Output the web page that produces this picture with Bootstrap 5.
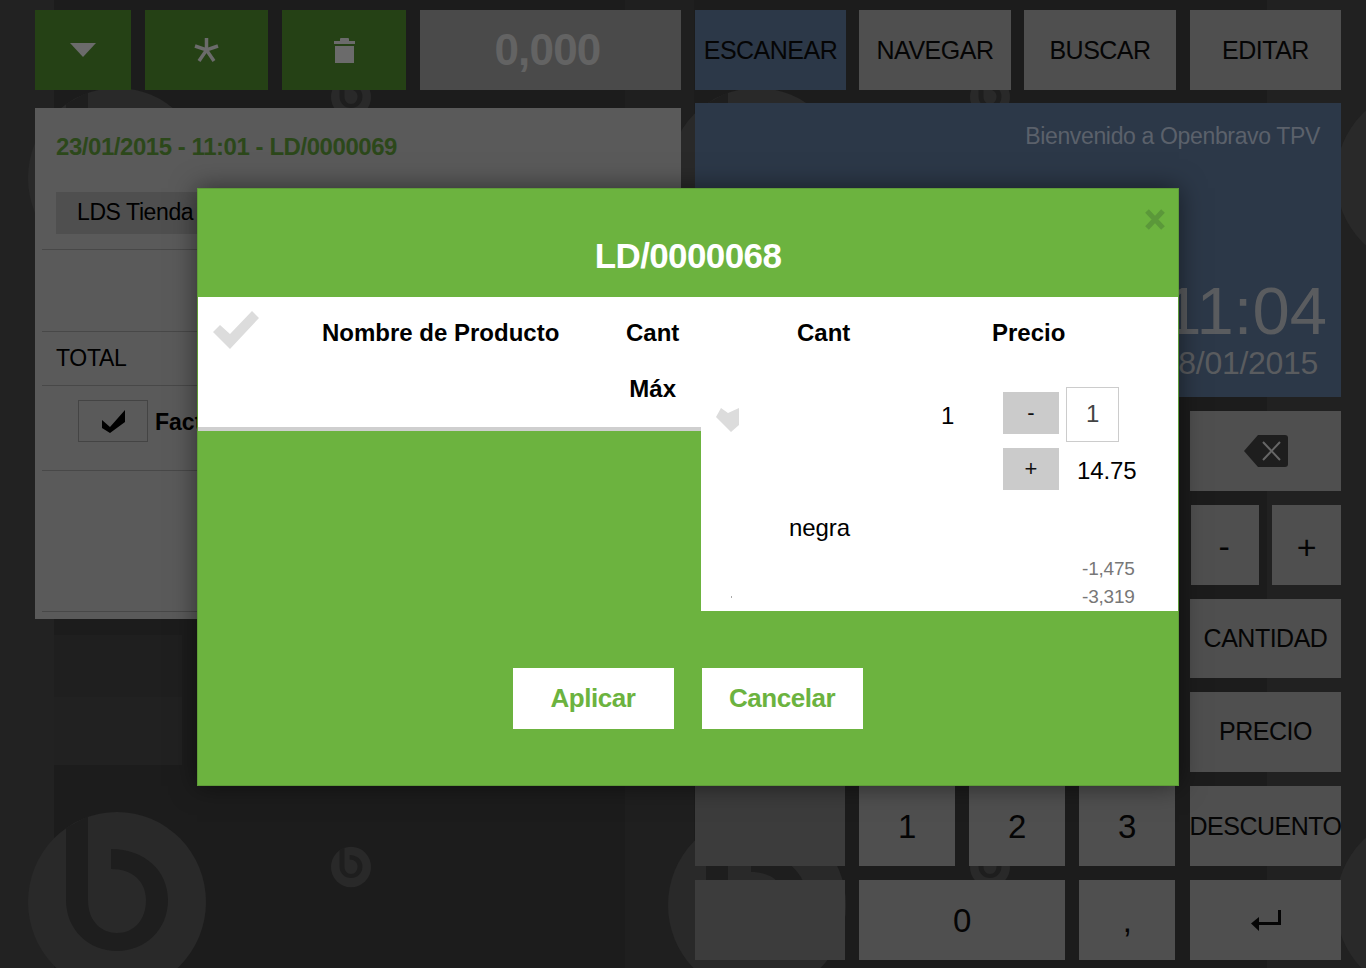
<!DOCTYPE html>
<html lang="es">
<head>
    <meta charset="UTF-8">
    <meta name="viewport" content="width=device-width, initial-scale=1.0">
    <title>Openbravo TPV</title>
    <link rel="stylesheet" href="https://cdn.jsdelivr.net/npm/bootstrap@5.3.0/dist/css/bootstrap.min.css">
    <style>
        body { background: #1c1c1c; font-family: "Liberation Sans", Arial, sans-serif; height: 968px; overflow: hidden; color: #000; }
        .pos-wrap { position: relative; width: 1366px; height: 968px; overflow: hidden; }
        .bg-logos { position: absolute; inset: 0; }
        .pos-main { position: relative; display: grid; grid-template-columns: 646px 646px; column-gap: 14px; padding: 10px 0 0 35px; }
        .pos-btn { background: #4f4f4f; display: flex; align-items: center; justify-content: center; font-size: 25px; letter-spacing: -.5px; height: 80px; color: #050505; white-space: nowrap; }
        .btn-dark-green { background: #254115; }
        .btn-dark-blue { background: #2c3848; }
        .btn-blank { background: #3c3c3c; }
        .top-left { display: grid; grid-template-columns: 96px 123px 124px 261px; column-gap: 14px; }
        .top-right { display: grid; grid-template-columns: 151px 152px 152px 152px; column-gap: 13px; }
        .top-right .pos-btn { padding-top: 2px; }
        .top-right .pos-btn:last-child { margin-left: 1px; width: 151px; }
        .qty-box { font-size: 44px; font-weight: 700; color: #636363; background: #4a4a4a; padding-right: 6px; letter-spacing: -.8px; }
        .ticket-panel { background: #5a5a5a; height: 511px; margin-top: 18px; padding: 0 7px; }
        .ticket-title { color: #2c481a; font-weight: 700; font-size: 24px; letter-spacing: -.45px; padding: 21px 14px 0; height: 84px; }
        .ticket-row { border-bottom: 1px solid #484848; }
        .bp-name { display: block; background: #4f4f4f; font-size: 23px; letter-spacing: -.4px; margin-left: 14px; padding: 3px 21px; height: 42px; width: 300px; }
        .invoice-box { width: 70px; height: 42px; border: 1px solid #444; display: flex; align-items: center; justify-content: center; }
        .info-panel { background: #2c3848; height: 294px; margin-top: 13px; padding: 16px 21px; position: relative; text-align: right; color: #5b616b; }
        .info-welcome { font-size: 23px; letter-spacing: -.35px; }
        .info-clock { position: absolute; right: 14px; top: 170px; font-size: 67px; line-height: 76px; color: #5a5c5f; }
        .info-date { position: absolute; right: 23px; top: 242px; font-size: 32px; line-height: 37px; letter-spacing: -.3px; color: #5a5c5f; }
        .keypad { display: grid; grid-template-columns: 150px 96px 96px 96px 152px; grid-template-rows: 80px 80px 79px 80px 80px 80px; gap: 14px; margin-top: 14px; }
        .keypad .pos-btn { height: auto; }
        .keypad-side { margin-left: 1px; }
        .small-keys { display: grid; grid-template-columns: 68px 69px; column-gap: 13px; padding-left: 1px; }
        .minus-key { font-size: 34px; padding: 2px 2px 0 0; }
        .plus-key { font-size: 34px; padding: 4px 0 0 0; }
        .digit-key { font-size: 33px; padding-top: 1px; }
        .popup { position: absolute; left: 197px; top: 188px; width: 982px; height: 598px; background: #6cb33f; border: 1px solid #5f9c38; box-shadow: 0 0 24px rgba(0,0,0,.5); }
        .popup-close { position: absolute; right: 13px; top: 20px; line-height: 0; }
        .popup-title { color: #fff; font-weight: 700; font-size: 35px; letter-spacing: -.6px; text-align: center; height: 108px; padding-top: 45px; line-height: 44px; }
        .popup-body { display: flex; height: 314px; }
        .popup-head { position: relative; width: 503px; height: 134px; background: #fff; border-bottom: 4px solid #cfcfcf; font-weight: 700; font-size: 24px; line-height: 56px; }
        .head-check { position: absolute; left: 15px; top: 14px; }
        .head-name { position: absolute; left: 124px; top: 8px; }
        .head-max { position: absolute; left: 428px; top: 8px; text-align: center; }
        .popup-line { position: relative; width: 477px; background: #fff; font-size: 24px; letter-spacing: -.1px; }
        .popup-line > * { position: absolute; }
        .line-head { font-weight: 700; line-height: 56px; letter-spacing: 0; top: 8px; }
        .qty-step { width: 56px; height: 42px; background: #cbcbcb; border: 0; padding: 0; font-size: 22px; line-height: 36px; color: #111; border-radius: 0; }
        .qty-input { width: 53px; height: 55px; border: 1px solid #ccc; background: #fff; text-align: center; line-height: 52px; color: #444; }
        .tax-val { font-size: 19px; color: #777; letter-spacing: -.2px; }
        .tiny-dot { left: 30px; top: 299px; width: 1px; height: 2px; background: #aaa; }
        .popup-actions { display: flex; justify-content: center; gap: 28px; margin-top: 57px; margin-left: -1px; }
        .popup-btn { width: 161px; height: 61px; background: #fff; color: #6cb33f; border: 0; border-radius: 0; font-weight: 700; font-size: 26px; letter-spacing: -.45px; padding: 0; }
        .popup-btn:hover { background: #fff; color: #6cb33f; }
    </style>
</head>
<body>
    <div class="pos-wrap">
        <!-- fondo con logos -->
        <svg class="bg-logos" width="1366" height="968" viewBox="0 0 1366 968" aria-hidden="true">
            <defs>
                <g id="ob-logo">
                    <ellipse cx="0" cy="0" rx="89" ry="90" fill="#292929"/>
                    <path d="M-51 -74 L-29 -86 V-2 C-29 20 -15 31 0 31 C17 31 29 18 29 -2 C29 -20 16 -33 -6 -33 V-53 C28 -53 51 -31 51 -2 C51 28 28 49 0 49 C-28 49 -51 28 -51 -2 Z" fill="#1e1e1e"/>
                </g>
            </defs>
            <rect x="0" y="0" width="54" height="968" fill="#222"/>
            <rect x="625" y="0" width="69" height="968" fill="#1f1f1f"/>
            <rect x="1267" y="0" width="99" height="968" fill="#212121"/>
            <rect x="54" y="635" width="128" height="62" fill="#1f1f1f"/>
            <rect x="54" y="697" width="128" height="68" fill="#212121"/>
            <use href="#ob-logo" transform="translate(117 902)"/>
            <use href="#ob-logo" transform="translate(117 178)"/>
            <use href="#ob-logo" transform="translate(757 905)"/>
            <use href="#ob-logo" transform="translate(757 178)"/>
            <use href="#ob-logo" transform="translate(1425 905)"/>
            <use href="#ob-logo" transform="translate(1425 178)"/>
            <use href="#ob-logo" transform="translate(351 867) scale(.225)"/>
            <use href="#ob-logo" transform="translate(351 97) scale(.225)"/>
            <use href="#ob-logo" transform="translate(990 867) scale(.225)"/>
            <use href="#ob-logo" transform="translate(990 97) scale(.225)"/>
        </svg>

        <div class="pos-main">
            <!-- columna izquierda -->
            <div>
                <div class="top-left">
                    <div class="pos-btn btn-dark-green">
                        <svg width="26" height="14" viewBox="0 0 26 14"><path d="M0 0H26L13 14Z" fill="#6b6b6b"/></svg>
                    </div>
                    <div class="pos-btn btn-dark-green">
                        <svg width="25" height="24" viewBox="0 0 25 24"><path d="M12.5 0V12M1 8L12.5 12L24 8M5 23L12.5 12L20 23" fill="none" stroke="#6b6b6b" stroke-width="3.5"/></svg>
                    </div>
                    <div class="pos-btn btn-dark-green">
                        <svg width="21" height="25" viewBox="0 0 21 25"><path d="M0 3H6V1Q6 0 7 0H14Q15 0 15 1V3H21V6H0ZM1 8H20V25H1Z" fill="#6b6b6b"/></svg>
                    </div>
                    <div class="pos-btn qty-box">0,000</div>
                </div>
                <div class="ticket-panel">
                    <div class="ticket-title">23/01/2015 - 11:01 - LD/0000069</div>
                    <div class="ticket-row" style="height:58px"><span class="bp-name">LDS Tienda</span></div>
                    <div class="ticket-row" style="height:82px"></div>
                    <div class="ticket-row d-flex align-items-center" style="height:54px;font-size:23px;letter-spacing:-.3px;padding-left:14px">TOTAL</div>
                    <div class="ticket-row" style="height:85px;padding:14px 0 0 36px">
                        <div class="d-flex align-items-center" style="gap:7px">
                            <div class="invoice-box">
                                <svg width="23" height="23" viewBox="0 0 23 23"><path d="M0 10L8 17L23 0V12L8 23L0 18Z" fill="#000"/></svg>
                            </div>
                            <b style="font-size:23px;padding-top:3px">Factura</b>
                        </div>
                    </div>
                    <div class="ticket-row" style="height:141px"></div>
                </div>
            </div>

            <!-- columna derecha -->
            <div>
                <div class="top-right">
                    <div class="pos-btn btn-dark-blue">ESCANEAR</div>
                    <div class="pos-btn">NAVEGAR</div>
                    <div class="pos-btn">BUSCAR</div>
                    <div class="pos-btn">EDITAR</div>
                </div>
                <div class="info-panel">
                    <div class="info-welcome">Bienvenido a Openbravo TPV</div>
                    <div class="info-clock">11:04</div>
                    <div class="info-date">28/01/2015</div>
                </div>
                <div class="keypad">
                    <div class="pos-btn btn-blank"></div>
                    <div class="pos-btn"></div>
                    <div class="pos-btn"></div>
                    <div class="pos-btn"></div>
                    <div class="pos-btn keypad-side">
                        <svg width="44" height="32" viewBox="0 0 44 32"><path d="M14 0H41Q44 0 44 3V29Q44 32 41 32H14L0 16Z" fill="#1e1e1e"/><path d="M19 7L36 25M36 7L19 25" stroke="#666" stroke-width="2"/></svg>
                    </div>
                    <div class="pos-btn btn-blank"></div>
                    <div class="pos-btn"></div>
                    <div class="pos-btn"></div>
                    <div class="pos-btn"></div>
                    <div class="small-keys keypad-side">
                        <div class="pos-btn minus-key">-</div>
                        <div class="pos-btn plus-key">+</div>
                    </div>
                    <div class="pos-btn btn-blank"></div>
                    <div class="pos-btn"></div>
                    <div class="pos-btn"></div>
                    <div class="pos-btn"></div>
                    <div class="pos-btn keypad-side">CANTIDAD</div>
                    <div class="pos-btn btn-blank"></div>
                    <div class="pos-btn"></div>
                    <div class="pos-btn"></div>
                    <div class="pos-btn"></div>
                    <div class="pos-btn keypad-side">PRECIO</div>
                    <div class="pos-btn btn-blank"></div>
                    <div class="pos-btn digit-key">1</div>
                    <div class="pos-btn digit-key">2</div>
                    <div class="pos-btn digit-key">3</div>
                    <div class="pos-btn keypad-side" style="padding-top:1px">DESCUENTO</div>
                    <div class="pos-btn btn-blank"></div>
                    <div class="pos-btn digit-key" style="grid-column:span 2">0</div>
                    <div class="pos-btn digit-key">,</div>
                    <div class="pos-btn keypad-side">
                        <svg width="30" height="21" viewBox="0 0 30 21"><path d="M27 0H30V15H8V21L0 13.5L8 7V12H27Z" fill="#050505"/></svg>
                    </div>
                </div>
            </div>
        </div>

        <!-- ventana modal -->
        <div class="popup">
            <div class="popup-close">
                <svg width="20" height="21" viewBox="0 0 20 21"><path d="M2 2L18 19M18 2L2 19" stroke="#5b983a" stroke-width="5"/></svg>
            </div>
            <div class="popup-title">LD/0000068</div>
            <div class="popup-body">
                <div class="popup-head">
                    <svg class="head-check" width="46" height="38" viewBox="0 0 46 38"><path d="M0 21L7 14L17 23L39 0L46 7L17 38Z" fill="#dcdcdc"/></svg>
                    <div class="head-name">Nombre de Producto</div>
                    <div class="head-max">Cant<br>Máx</div>
                </div>
                <div class="popup-line">
                    <div class="line-head" style="left:96px">Cant</div>
                    <div class="line-head" style="left:291px">Precio</div>
                    <svg style="left:15px;top:111px" width="23" height="24" viewBox="0 0 23 24"><path d="M0 9L5 0L12 5L23 0V17L15 24Z" fill="#dcdcdc"/></svg>
                    <div style="left:240px;top:101px">1</div>
                    <button class="btn qty-step" style="left:302px;top:95px">-</button>
                    <div class="qty-input" style="left:365px;top:90px">1</div>
                    <button class="btn qty-step" style="left:302px;top:151px">+</button>
                    <div style="left:376px;top:156px">14.75</div>
                    <div style="left:88px;top:213px">negra</div>
                    <div class="tax-val" style="left:381px;top:258px">-1,475</div>
                    <div class="tax-val" style="left:381px;top:286px">-3,319</div>
                    <div class="tiny-dot"></div>
                </div>
            </div>
            <div class="popup-actions">
                <button class="btn popup-btn">Aplicar</button>
                <button class="btn popup-btn">Cancelar</button>
            </div>
        </div>
    </div>

    <script src="https://cdn.jsdelivr.net/npm/bootstrap@5.3.0/dist/js/bootstrap.bundle.min.js"></script>
</body>
</html>
